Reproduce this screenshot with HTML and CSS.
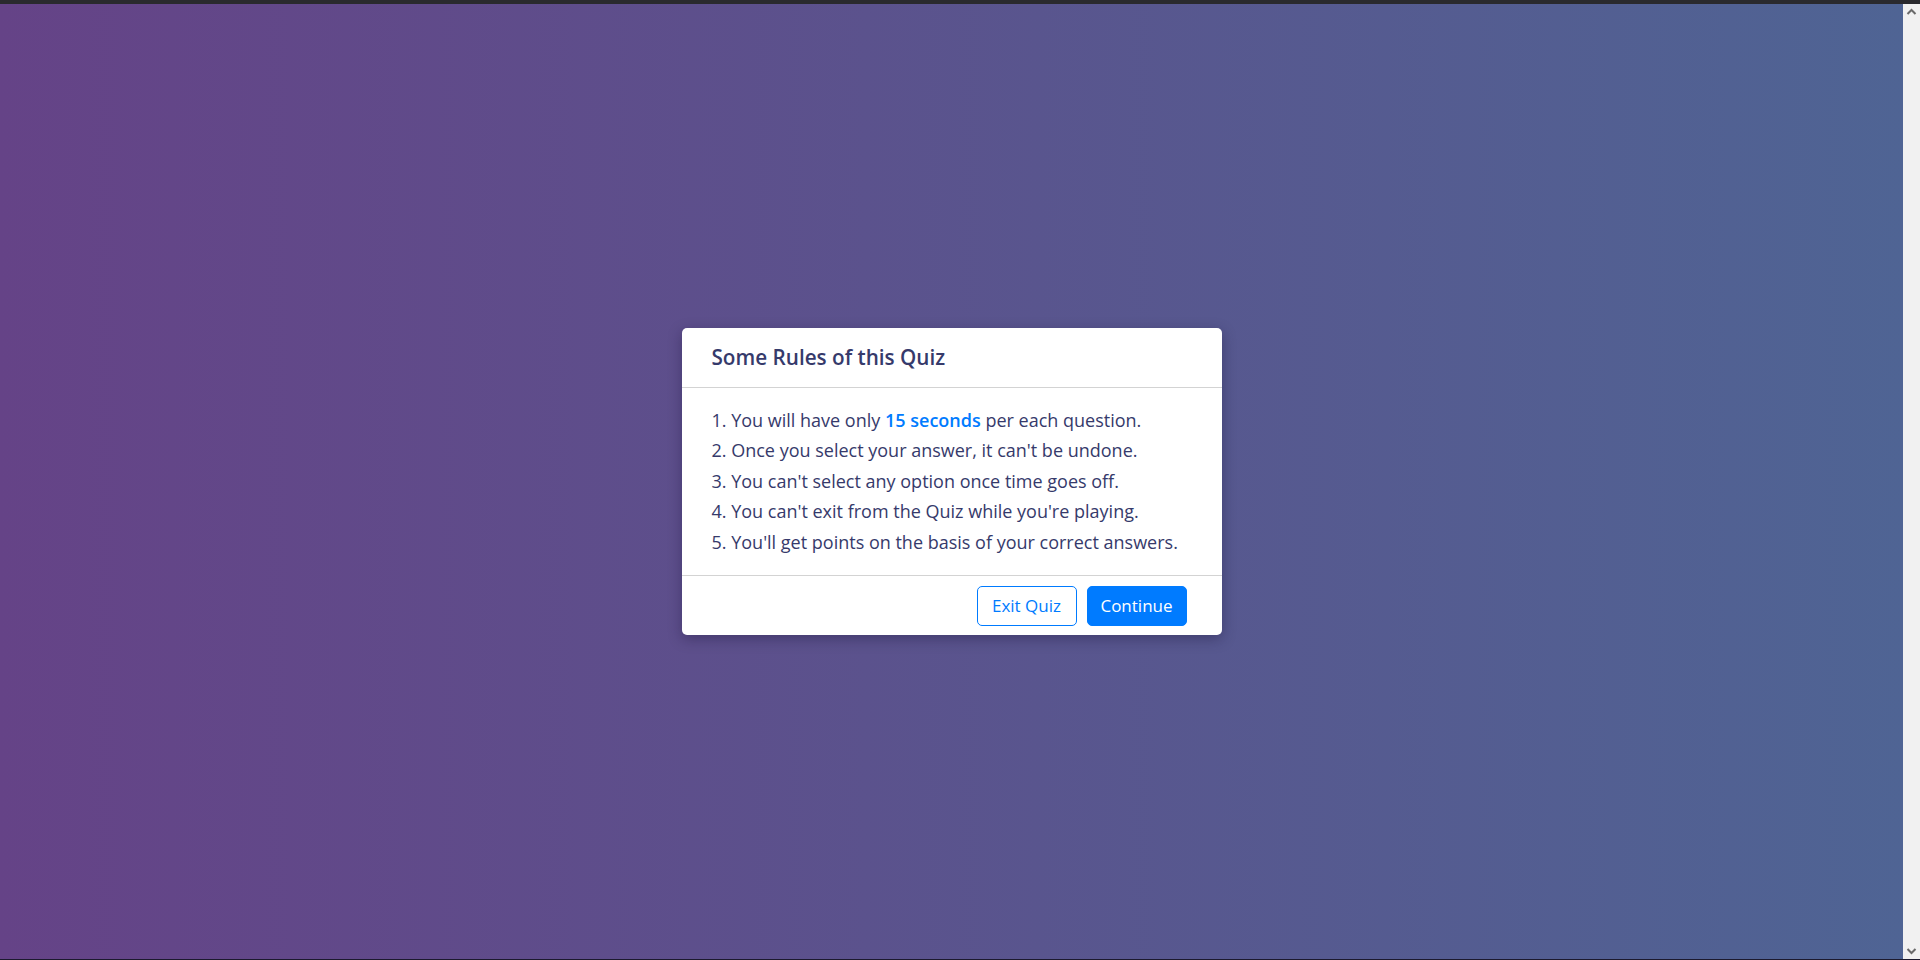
FILE: index.html
```html
<!DOCTYPE html>
<html lang="en">
<head>
<meta charset="utf-8">
<title>Quiz Rules</title>
<link rel="stylesheet" href="styles.css">
</head>
<body>
<div class="frame-top"></div>
<div class="window">
  <main class="viewport">
    <section class="info-box">
      <div class="info-title">Some Rules of this Quiz</div>
      <div class="info-list">
        <div class="info">1. You will have only <span class="hl">15 seconds</span> per each question.</div>
        <div class="info">2. Once you select your answer, it can't be undone.</div>
        <div class="info">3. You can't select any option once time goes off.</div>
        <div class="info">4. You can't exit from the Quiz while you're playing.</div>
        <div class="info">5. You'll get points on the basis of your correct answers.</div>
      </div>
      <div class="buttons">
        <button class="btn btn-outline">Exit Quiz</button>
        <button class="btn btn-solid">Continue</button>
      </div>
    </section>
  </main>
  <div class="scrollbar">
    <div class="sb-arrow">
      <svg width="17" height="17" viewBox="0 0 17 17"><polyline points="4.5,10 8.5,6 12.5,10" fill="none" stroke="#6a6a6a" stroke-width="2"/></svg>
    </div>
    <div class="sb-arrow">
      <svg width="17" height="17" viewBox="0 0 17 17"><polyline points="4.5,7 8.5,11 12.5,7" fill="none" stroke="#6a6a6a" stroke-width="2"/></svg>
    </div>
  </div>
</div>
<div class="frame-bottom"></div>
</body>
</html>
```
FILE: styles.css
```css
* { box-sizing: border-box; margin: 0; padding: 0; }
html, body { height: 100%; overflow: hidden; }
body {
  display: flex;
  flex-direction: column;
  font-family: "Open Sans", "DejaVu Sans", sans-serif;
  background: #222226;
}
.frame-top { height: 4px; flex: none; background: #2a2a2e; }
.frame-bottom { height: 1px; flex: none; background: #1c1a2e; }
.window { flex: 1; display: flex; min-height: 0; }
.viewport {
  flex: 1;
  display: flex;
  align-items: center;
  justify-content: center;
  background: linear-gradient(to right, #654387, #4f6494);
}
.scrollbar {
  width: 17px;
  flex: none;
  background: #f1f1f1;
  display: flex;
  flex-direction: column;
  justify-content: space-between;
}
.sb-arrow { height: 17px; display: flex; }
.info-box {
  width: 540px;
  background: #fff;
  border-radius: 5px;
  box-shadow: 0 4px 14px rgba(20, 15, 50, 0.35);
  color: #363a6b;
}
.info-title {
  height: 60px;
  display: flex;
  align-items: center;
  padding: 0 30px;
  border-bottom: 1px solid #d3d3d3;
  font-size: 20.7px;
  font-weight: 600;
}
.info-list { padding: 15px 30px; }
.info {
  margin: 5px 0;
  font-size: 18px;
  line-height: 25.4px;
}
.hl { font-weight: 600; color: #007bff; }
.buttons {
  height: 60px;
  display: flex;
  align-items: center;
  justify-content: flex-end;
  padding: 0 30px;
  border-top: 1px solid #d3d3d3;
}
.btn {
  margin: 0 5px;
  height: 40px;
  width: 100px;
  font-family: inherit;
  font-size: 17px;
  font-weight: 500;
  border-radius: 5px;
  border: 1px solid #007bff;
}
.btn-outline { background: #fff; color: #007bff; }
.btn-solid { background: #007bff; color: #fff; }
```
